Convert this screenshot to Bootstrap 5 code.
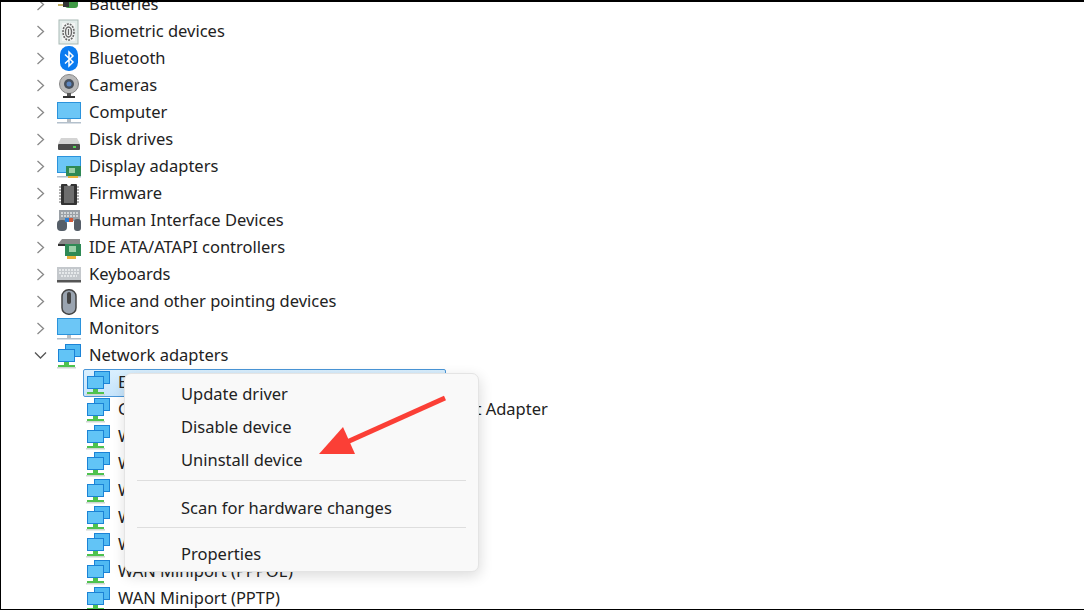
<!doctype html>
<html lang="en"><head><meta charset="utf-8">
<link href="https://cdn.jsdelivr.net/npm/bootstrap@5.3.0/dist/css/bootstrap.min.css" rel="stylesheet">
<style>
html,body{height:100%;overflow:hidden;background:#fff}
body{font-family:"Noto Sans","Open Sans",sans-serif;color:#222}
.stage{position:relative;width:1084px;height:610px;overflow:hidden;background:#fff}
.edge-top{position:absolute;top:0;left:0;right:0;height:2px;background:#000;z-index:5}
.edge-bottom{position:absolute;bottom:0;left:0;right:0;height:1px;background:#000;z-index:5}
.edge-left{position:absolute;top:0;bottom:0;left:0;width:1px;background:#000;z-index:5}
.dev-tree{list-style:none;margin:-9px 0 0;padding:0 0 0 34px}
.dev-row{height:27px;font-size:16.5px;line-height:27px;white-space:nowrap}
.dev-row span{margin-top:-2px}
.dev-chev{width:13px;height:13px;flex:none}
.dev-ico{width:26px;height:26px;flex:none;margin:0 7px 0 9px;filter:blur(.35px);overflow:hidden}
.dev-sub{padding-left:51px}
.dev-sub .dev-ico{margin:0 7px 0 0}
.dev-sel{position:absolute;left:83px;top:369px;width:363px;height:28px;background:linear-gradient(#d9effe,#c6e4fb);border:1px solid #4a96d8;border-radius:2px;z-index:0}
.dev-label,.dev-icoz{position:relative;z-index:1}
.ctx{position:absolute;left:124px;top:373px;width:355px;height:199px;background:#f9f9f9;border:1px solid #e4e4e4;border-radius:7px;box-shadow:1px 4px 14px rgba(0,0,0,.14);z-index:2;padding-top:3px}
.ctx-item{font-size:16.5px;line-height:33px;height:33px;padding-left:56px;color:#222}
.ctx-rule{height:1px;background:#dedede;margin:4px 12px 10px}
.ctx-rule + .ctx-item + .ctx-rule{margin:3px 12px 9px}
.ctx-arrow{position:absolute;left:300px;top:380px;z-index:3}
</style></head><body>
<svg width="0" height="0" class="d-block">
<defs>
<symbol id="net" viewBox="0 0 26 26">
 <rect x="9" y="1" width="16" height="13" fill="#1b83d6"/><rect x="10" y="2" width="14" height="11" fill="#4fb9f2"/>
 <rect x="2" y="6" width="17" height="13" fill="#1b83d6"/><rect x="3" y="7" width="15" height="11" fill="#62c4f6"/>
 <path d="M8 19h5v3h6v2H2v-2h6z" fill="#4fc24f"/><rect x="1" y="24" width="19" height="1.500" fill="#cfd6d2"/>
</symbol>
<symbol id="mon" viewBox="0 0 26 26">
 <rect x="1" y="2" width="24" height="17" fill="#2b93dc"/><rect x="2" y="3" width="22" height="15" fill="#6cc6f6"/>
 <rect x="11" y="19" width="4" height="3" fill="#b9bfc4"/><rect x="1" y="22" width="24" height="1.500" fill="#b3c0cc"/>
</symbol>
<symbol id="chip" viewBox="0 0 26 26">
 <rect x="5" y="3" width="16" height="21" rx="1" fill="#333"/><rect x="8" y="5" width="10" height="17" fill="#6d6d6d"/>
 <path d="M11 3a2 2 0 0 0 4 0z" fill="#fff"/>
 <path d="M3 6h2M3 9h2M3 12h2M3 15h2M3 18h2M3 21h2M21 6h2M21 9h2M21 12h2M21 15h2M21 18h2M21 21h2" stroke="#999" stroke-width="1.500"/>
</symbol>
</defs></svg>
<div class="stage">
<div class="edge-top"></div><div class="edge-bottom"></div><div class="edge-left"></div>
<div class="dev-sel"></div>
<ul class="dev-tree" id="tree"></ul>
<div class="ctx">
 <div class="ctx-item">Update driver</div>
 <div class="ctx-item">Disable device</div>
 <div class="ctx-item">Uninstall device</div>
 <div class="ctx-rule"></div>
 <div class="ctx-item">Scan for hardware changes</div>
 <div class="ctx-rule"></div>
 <div class="ctx-item">Properties</div>
</div>
<svg class="ctx-arrow" width="150" height="80" viewBox="300 380 150 80"><path d="M445 398 347 442" stroke="#fb3f36" stroke-width="5" fill="none"/><path d="M319 454 343 427 355 454z" fill="#fb3f36"/></svg>
</div>
<script>
const I={
bat:'<rect x="9" y="3" width="13" height="13" rx="3" fill="#3f9a45"/><path d="M2 8h6M2 13h6" stroke="#c4b060" stroke-width="2"/><rect x="7" y="5" width="6" height="10" fill="#333"/>',
bio:'<rect x="3" y="1" width="19" height="24" fill="#e3ecea" stroke="#a9bab5"/><rect x="6" y="4" width="13" height="18" fill="#f3f5f4"/><ellipse cx="12.500" cy="13" rx="5.500" ry="8" fill="none" stroke="#666" stroke-width="1.600" stroke-dasharray="2 1"/><ellipse cx="12.500" cy="13" rx="3" ry="5" fill="none" stroke="#666" stroke-width="1.400"/><path d="M12.500 10v6" stroke="#666" stroke-width="1.200"/>',
bt:'<rect x="4" y="0" width="18" height="25" rx="8.500" fill="#0a7bf0"/><path d="M9 8.500 17 16l-4 4V6l4 4-8 7.500" fill="none" stroke="#fff" stroke-width="1.500"/>',
cam:'<circle cx="13" cy="11" r="9.500" fill="#b9b9b9" stroke="#888"/><circle cx="13" cy="11" r="5" fill="#47505c"/><circle cx="13" cy="11" r="2.500" fill="#5c86c0"/><rect x="11" y="20" width="4" height="3" fill="#555"/><rect x="7" y="23" width="12" height="2" fill="#333"/>',
mon:'<use href="#mon"/>',
disk:'<path d="M5 11h16l3 6H2z" fill="#d4d4d4"/><rect x="2" y="17" width="22" height="6" rx="1" fill="#4a4a4a"/><rect x="17" y="19" width="3" height="2" fill="#55d055"/>',
dsp:'<use href="#mon"/><rect x="10" y="12" width="15" height="10" fill="#2f8a55"/><rect x="13" y="14" width="6" height="5" fill="#9bd0a8"/><rect x="12" y="22" width="10" height="2" fill="#e8b23a"/>',
chip:'<use href="#chip"/>',
hid:'<rect x="3" y="2" width="21" height="11" fill="#9aa0a6"/><path d="M5 5h17M5 8h17" stroke="#e4e6e8" stroke-width="1.500" stroke-dasharray="2 1"/><rect x="1" y="12" width="10" height="11" rx="4" fill="#555e68"/><rect x="9" y="10" width="5" height="4" fill="#2d7fd0"/><rect x="13" y="10" width="4" height="4" fill="#d05a3a"/><rect x="18" y="11" width="7" height="12" rx="3" fill="#555e68"/>',
ide:'<path d="M6 4h18v5H2z" fill="#8a8a8a"/><path d="M2 9h12v2H2z" fill="#333"/><rect x="9" y="9" width="16" height="12" fill="#2f8a55"/><rect x="13" y="11" width="7" height="6" fill="#9bd0a8"/><rect x="11" y="21" width="9" height="3" fill="#e8b23a"/>',
kbd:'<rect x="1" y="5" width="24" height="13" fill="#c4c8cc"/><path d="M3 8h20M3 11h20M5 14h16" stroke="#f0f2f4" stroke-width="1.500" stroke-dasharray="2 1"/><rect x="1" y="18" width="24" height="2.500" fill="#555"/>',
mouse:'<rect x="6" y="0.800" width="14" height="24.400" rx="6.500" fill="#9aa4b0" stroke="#444" stroke-width="1.500"/><rect x="11" y="3" width="4" height="12" rx="2" fill="#444"/>',
net:'<use href="#net"/>'};
const rows=[['bat','Batteries'],['bio','Biometric devices'],['bt','Bluetooth'],['cam','Cameras'],['mon','Computer'],['disk','Disk drives'],['dsp','Display adapters'],['chip','Firmware'],['hid','Human Interface Devices'],['ide','IDE ATA/ATAPI controllers'],['kbd','Keyboards'],['mouse','Mice and other pointing devices'],['mon','Monitors'],['net','Network adapters',1]];
const subs=['Ethernet','Gigabit Network Connections (Virtual) Ethernet Adapter','WAN Miniport (IKEv2)','WAN Miniport (IP)','WAN Miniport (IPv6)','WAN Miniport (L2TP)','WAN Miniport (Network Monitor)','WAN Miniport (PPPOE)','WAN Miniport (PPTP)'];
let h='';
for(const [k,t,o] of rows){h+=`<li class="dev-row d-flex align-items-center"><svg class="dev-chev" viewBox="0 0 13 13"><path d="${o?'M1 3.500 6.500 9 12 3.500':'M3.500 1 9.500 6.500 3.500 12'}" fill="none" stroke="${o?'#555':'#888'}" stroke-width="1.300"/></svg><svg class="dev-ico" viewBox="0 0 26 26">${I[k]}</svg><span>${t}</span></li>`}
subs.forEach(t=>{h+=`<li class="dev-row dev-sub d-flex align-items-center"><svg class="dev-ico dev-icoz" viewBox="0 0 26 26"><use href="#net"/></svg><span class="dev-label">${t}</span></li>`});
document.getElementById('tree').innerHTML=h;
</script>
<script src="https://cdn.jsdelivr.net/npm/bootstrap@5.3.0/dist/js/bootstrap.bundle.min.js"></script>
</body></html>
